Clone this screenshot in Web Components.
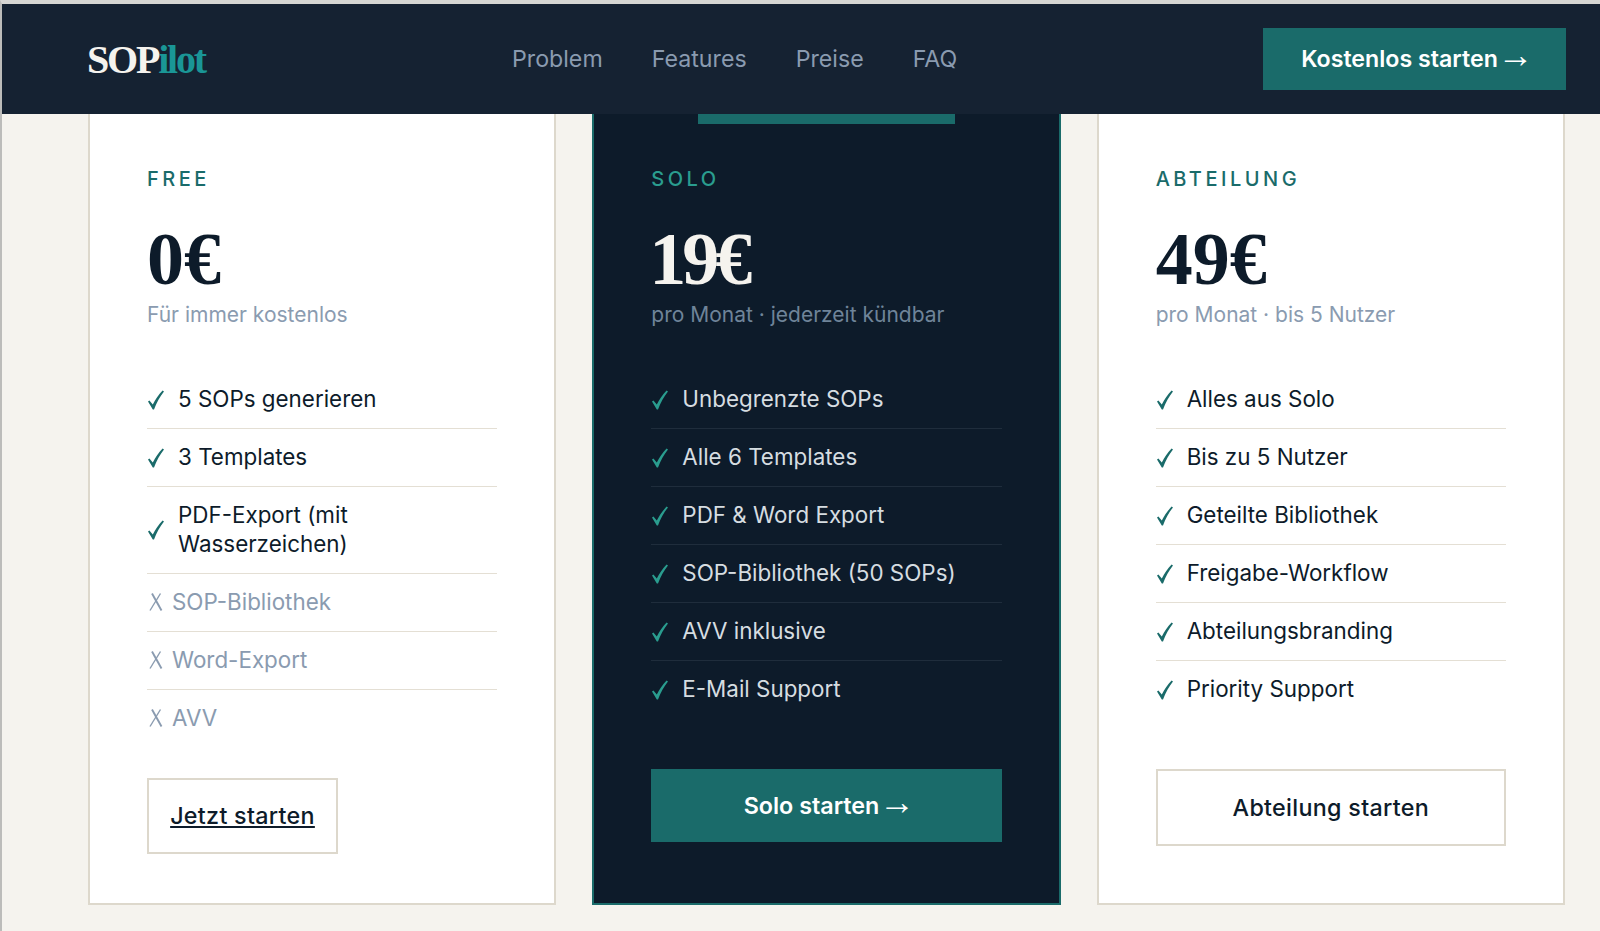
<!DOCTYPE html>
<html lang="de">
<head>
<meta charset="utf-8">
<title>SOPilot</title>
<style>
    html, body { margin: 0; height: 100%; }
    body {
        background: #f5f3ee;
        border-top: 4px solid #d6d6d3;
        border-left: 2px solid #bcbcba;
        box-sizing: border-box;
        overflow: hidden;
        font-family: "Inter", "Noto Sans", sans-serif;
    }
</style>
</head>
<body>
<sop-header></sop-header>
<plan-grid>
    <plan-card label="FREE" price="0€" note="Für immer kostenlos" cta="Jetzt starten" variant="link">
        <plan-feature>5 SOPs generieren</plan-feature>
        <plan-feature>3 Templates</plan-feature>
        <plan-feature>PDF-Export (mit<br>Wasserzeichen)</plan-feature>
        <plan-feature off>SOP-Bibliothek</plan-feature>
        <plan-feature off>Word-Export</plan-feature>
        <plan-feature off last>AVV</plan-feature>
    </plan-card>
    <plan-card label="SOLO" price="19€" note="pro Monat · jederzeit kündbar" cta="Solo starten" arrow variant="primary" featured>
        <plan-feature>Unbegrenzte SOPs</plan-feature>
        <plan-feature>Alle 6 Templates</plan-feature>
        <plan-feature>PDF &amp; Word Export</plan-feature>
        <plan-feature>SOP-Bibliothek (50 SOPs)</plan-feature>
        <plan-feature>AVV inklusive</plan-feature>
        <plan-feature last>E-Mail Support</plan-feature>
    </plan-card>
    <plan-card label="ABTEILUNG" price="49€" note="pro Monat · bis 5 Nutzer" cta="Abteilung starten" variant="outline">
        <plan-feature>Alles aus Solo</plan-feature>
        <plan-feature>Bis zu 5 Nutzer</plan-feature>
        <plan-feature>Geteilte Bibliothek</plan-feature>
        <plan-feature>Freigabe-Workflow</plan-feature>
        <plan-feature>Abteilungsbranding</plan-feature>
        <plan-feature last>Priority Support</plan-feature>
    </plan-card>
</plan-grid>

<script>
class SopHeader extends HTMLElement {
    constructor() {
        super();
        this.shadowDOM = this.attachShadow({mode: 'open'});
        this.shadowDOM.innerHTML = `
            <style>
                :host {
                    display: flex;
                    align-items: center;
                    height: 110px;
                    padding: 0 34px 0 85px;
                    background: #152232;
                    position: relative;
                    z-index: 5;
                }
                .logo {
                    font: bold 40px "Liberation Serif", serif;
                    letter-spacing: -2.2px;
                    color: #f5f3ee;
                    width: 425px;
                }
                .logo span { color: #1a9696; }
                nav { display: flex; gap: 49px; flex: 1; }
                nav a { font-size: 23.2px; color: #8a9bb0; }
                .cta {
                    background: #1a6b6a;
                    color: #fff;
                    font-size: 23.2px;
                    font-weight: 600;
                    width: 303px;
                    height: 62px;
                    display: flex;
                    align-items: center;
                    justify-content: center;
                    gap: 6px;
                }
                .arrow {
                    font: 36px/1 "Liberation Sans", sans-serif;
                    margin: 0 -6px;
                    transform: translateY(-4px);
                }
            </style>
            <div class="logo">SOP<span>ilot</span></div>
            <nav><a>Problem</a><a>Features</a><a>Preise</a><a>FAQ</a></nav>
            <div class="cta">Kostenlos starten <span class="arrow">→</span></div>
        `;
    }
}

class PlanGrid extends HTMLElement {
    constructor() {
        super();
        this.shadowDOM = this.attachShadow({mode: 'open'});
        this.shadowDOM.innerHTML = `
            <style>
                :host {
                    display: grid;
                    grid-template-columns: repeat(3, 1fr);
                    gap: 36px;
                    padding: 0 35px 0 86px;
                }
            </style>
            <slot></slot>
        `;
    }
}

class PlanCard extends HTMLElement {
    constructor() {
        super();
        this.shadowDOM = this.attachShadow({mode: 'open'});
    }

    connectedCallback() {
        const a = name => this.getAttribute(name);
        const arrow = this.hasAttribute('arrow') ? ' <span class="arrow">→</span>' : '';
        this.shadowDOM.innerHTML = `
            <style>
                :host {
                    display: block;
                    box-sizing: border-box;
                    height: 791px;
                    padding: 53px 57px 0;
                    background: #fff;
                    border: 2px solid #ddd8cc;
                    border-top: 0;
                    position: relative;
                    color: #0d1b2a;
                    --line: #e4dfd4;
                    --note: #8a9bb0;
                    --tick: #1a6b6a;
                    --label: #1a6b6a;
                }
                :host([featured]) {
                    background: #0d1b2a;
                    border-color: #1a6b6a;
                    color: #d6dde1;
                    --line: #1f2d3c;
                    --note: #6f8499;
                    --tick: #2a9d8f;
                    --label: #2a9d8f;
                }
                .tab {
                    position: absolute;
                    top: 0;
                    left: 104px;
                    width: 257px;
                    height: 10px;
                    background: #1a6b6a;
                }
                .label {
                    font-size: 20px;
                    font-weight: 500;
                    line-height: 24px;
                    letter-spacing: 3.5px;
                    color: var(--label);
                }
                .price {
                    font: bold 74px/80px "Liberation Serif", serif;
                    margin-top: 28px;
                }
                :host([featured]) .price { color: #f5f3ee; letter-spacing: -4px; margin-left: -2px; }
                .note {
                    font-size: 21px;
                    line-height: 28px;
                    color: var(--note);
                    margin: 2px 0 42px;
                }
                .cta {
                    display: flex;
                    align-items: center;
                    justify-content: center;
                    gap: 6px;
                    box-sizing: border-box;
                    font-size: 23.3px;
                    font-weight: 500;
                    letter-spacing: .3px;
                    margin-top: 51px;
                }
                .arrow {
                    font: 36px/1 "Liberation Sans", sans-serif;
                    margin: 0 -6px;
                    transform: translateY(-4px);
                }
                .cta.link {
                    display: inline-flex;
                    width: 191px;
                    height: 76px;
                    border: 2px solid #ddd8cc;
                    text-decoration: underline;
                    margin-top: 31px;
                }
                .cta.primary {
                    height: 73px;
                    background: #1a6b6a;
                    color: #fff;
                    font-weight: 600;
                    letter-spacing: 0;
                }
                .cta.outline { height: 77px; border: 2px solid #ddd8cc; }
            </style>
            ${this.hasAttribute('featured') ? '<div class="tab"></div>' : ''}
            <div class="label">${a('label')}</div>
            <div class="price">${a('price')}</div>
            <div class="note">${a('note')}</div>
            <slot></slot>
            <div class="cta ${a('variant')}">${a('cta')}${arrow}</div>
        `;
    }
}

class PlanFeature extends HTMLElement {
    constructor() {
        super();
        this.shadowDOM = this.attachShadow({mode: 'open'});
    }

    connectedCallback() {
        const off = this.hasAttribute('off');
        const icon = off
            ? `<svg viewBox="0 0 16 20" width="16" height="20"><path d="M5 1.5 14.5 18.5" fill="none" stroke="#8a9bb0" stroke-width="1.9"/><path d="M13.5 1.5 3 18.5" fill="none" stroke="#8a9bb0" stroke-width="1.4"/></svg>`
            : `<svg viewBox="0 0 18 20" width="18" height="20"><path d="M1 11.5 2.4 10.6 5.8 14.6C8.4 9.6 11.4 5 15.6.6L17 1.4C13 6.4 9.6 12.4 7 19.4H5.8L1 11.5Z" fill="var(--tick)"/></svg>`;
        this.shadowDOM.innerHTML = `
            <style>
                :host {
                    display: flex;
                    align-items: center;
                    gap: 13px;
                    padding: 14.25px 0;
                    border-bottom: 1px solid var(--line);
                    font-size: 22.4px;
                    line-height: 28.5px;
                }
                :host([off]) { color: #8a9bb0; gap: 9px; }
                :host([last]) { border-bottom: 0; }
                svg { flex: none; }
            </style>
            ${icon}
            <div><slot></slot></div>
        `;
    }
}

customElements.define('sop-header', SopHeader);
customElements.define('plan-grid', PlanGrid);
customElements.define('plan-card', PlanCard);
customElements.define('plan-feature', PlanFeature);
</script>
</body>
</html>
